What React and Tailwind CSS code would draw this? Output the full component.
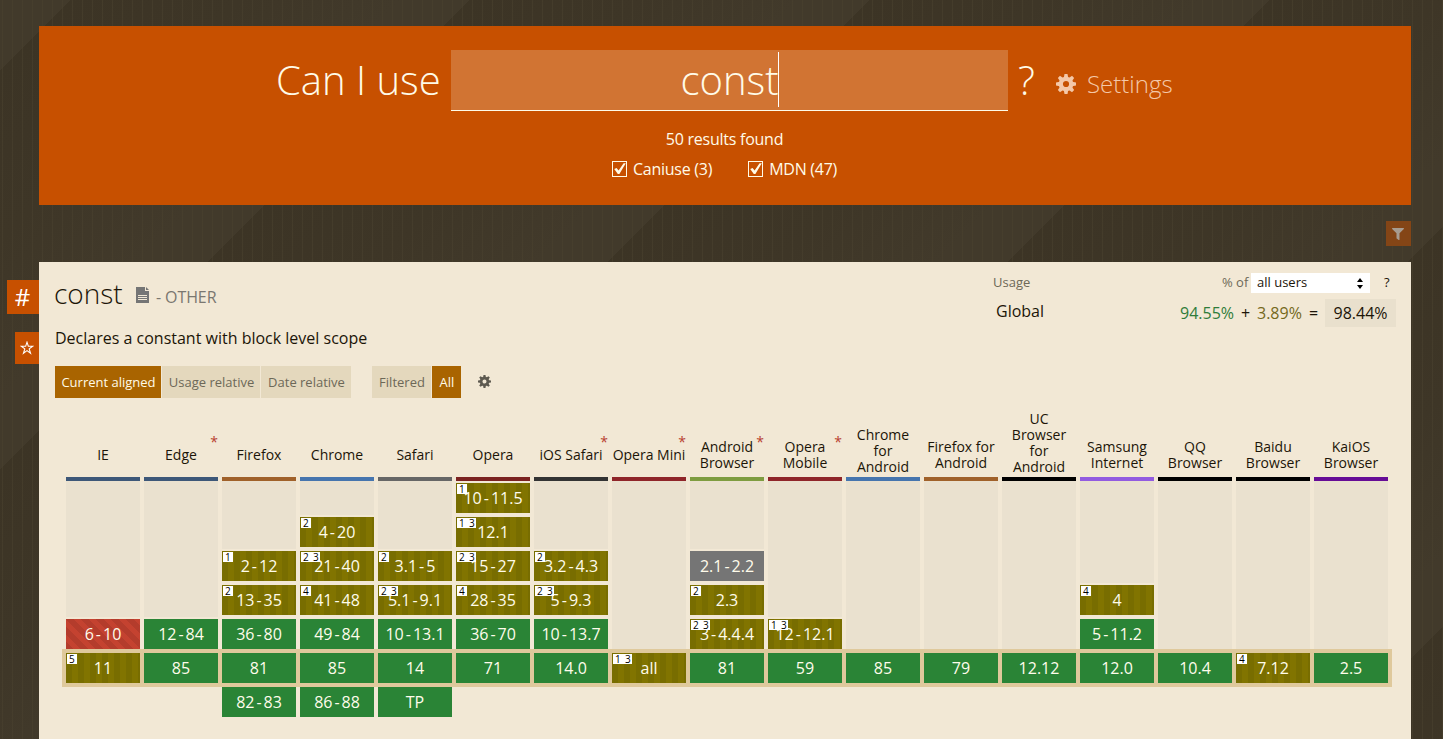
import React from "react";
import { FaFilter } from "react-icons/fa";

const Y = "y", P = "p", N = "n", U = "u";

const browsers = [
  { name: "IE", bar: "bg-[#3d5778]", rows: [0, 0, 0, 0, [N, "6-10"], [P, "11", "5"], 0] },
  { name: "Edge", star: true, bar: "bg-[#3d5778]", rows: [0, 0, 0, 0, [Y, "12-84"], [Y, "85"], 0] },
  { name: "Firefox", bar: "bg-[#a0612a]", rows: [0, 0, [P, "2-12", "1"], [P, "13-35", "2"], [Y, "36-80"], [Y, "81"], [Y, "82-83"]] },
  { name: "Chrome", bar: "bg-[#4675ae]", rows: [0, [P, "4-20", "2"], [P, "21-40", "2 3"], [P, "41-48", "4"], [Y, "49-84"], [Y, "85"], [Y, "86-88"]] },
  { name: "Safari", bar: "bg-[#666666]", rows: [0, 0, [P, "3.1-5", "2"], [P, "5.1-9.1", "2 3"], [Y, "10-13.1"], [Y, "14"], [Y, "TP"]] },
  { name: "Opera", bar: "bg-[#7b2220]", rows: [[P, "10-11.5", "1"], [P, "12.1", "1 3"], [P, "15-27", "2 3"], [P, "28-35", "4"], [Y, "36-70"], [Y, "71"], 0] },
  { name: "iOS Safari", star: true, bar: "bg-[#333333]", rows: [0, 0, [P, "3.2-4.3", "2"], [P, "5-9.3", "2 3"], [Y, "10-13.7"], [Y, "14.0"], 0] },
  { name: "Opera Mini", star: true, bar: "bg-[#8f2529]", rows: [0, 0, 0, 0, 0, [P, "all", "1 3"], 0] },
  { name: "Android Browser", star: true, bar: "bg-[#7e9c40]", rows: [0, 0, [U, "2.1-2.2"], [P, "2.3", "2"], [P, "3-4.4.4", "2 3"], [Y, "81"], 0] },
  { name: "Opera Mobile", star: true, bar: "bg-[#8f2529]", rows: [0, 0, 0, 0, [P, "12-12.1", "1 3"], [Y, "59"], 0] },
  { name: "Chrome for Android", tall: true, bar: "bg-[#4675ae]", rows: [0, 0, 0, 0, 0, [Y, "85"], 0] },
  { name: "Firefox for Android", bar: "bg-[#a0612a]", rows: [0, 0, 0, 0, 0, [Y, "79"], 0] },
  { name: "UC Browser for Android", tall: true, bar: "bg-black", rows: [0, 0, 0, 0, 0, [Y, "12.12"], 0] },
  { name: "Samsung Internet", bar: "bg-[#925be0]", rows: [0, 0, 0, [P, "4", "4"], [Y, "5-11.2"], [Y, "12.0"], 0] },
  { name: "QQ Browser", bar: "bg-black", rows: [0, 0, 0, 0, 0, [Y, "10.4"], 0] },
  { name: "Baidu Browser", bar: "bg-black", rows: [0, 0, 0, 0, 0, [P, "7.12", "4"], 0] },
  { name: "KaiOS Browser", bar: "bg-[#660c96]", rows: [0, 0, 0, 0, 0, [Y, "2.5"], 0] },
];

const fills = {
  y: "bg-[#2a8436]",
  p: "bg-[repeating-linear-gradient(90deg,#786d00_0px,#786d00_6px,#817400_6px,#817400_12px)]",
  n: "bg-[repeating-linear-gradient(45deg,#b43c2c_0px,#b43c2c_5.3px,#c44230_5.3px,#c44230_10.6px)]",
  u: "bg-[#757575]",
};

const teeth = [0, 45, 90, 135, 180, 225, 270, 315];

function Gear({ className }) {
  return (
    <svg viewBox="0 0 20 20" className={className} fill="currentColor">
      {teeth.map((a) => (
        <path key={a} d="M8.5 0h3l0.9 5H7.6z" transform={`rotate(${a} 10 10)`} />
      ))}
      <circle cx="10" cy="10" r="5.2" fill="none" stroke="currentColor" strokeWidth="4.2" />
    </svg>
  );
}

function Version({ text }) {
  const [a, b] = text.split("-");
  if (!b) return <span>{a}</span>;
  return (
    <span>
      {a}
      <span className="mx-[2px]">-</span>
      {b}
    </span>
  );
}

function Cell({ cell }) {
  if (!cell) return <div className="h-[30px]" />;
  const [kind, text, note] = cell;
  return (
    <div className={`relative flex h-[30px] items-center justify-center text-base leading-[30px] text-[#fffceb] ${fills[kind]}`}>
      <Version text={text} />
      {note && (
        <span className="absolute left-px top-px h-[10px] min-w-[10px] whitespace-pre bg-white pl-[2px] pr-px text-[10px] leading-[10px] text-black [word-spacing:-0.4px]">
          {note.replace(" ", "  ")}
        </span>
      )}
    </div>
  );
}

function Column({ browser }) {
  const first = browser.rows.findIndex(Boolean);
  return (
    <div className="w-[74px] shrink-0">
      <div className="relative flex h-[68px] flex-col justify-end">
        <div className={`flex justify-center text-center text-sm leading-4 text-[#1c1508] ${browser.tall ? "items-end pb-[2px]" : "h-11 items-center"}`}>
          <span className={browser.name === "Opera Mini" || browser.name === "iOS Safari" ? "whitespace-nowrap" : ""}>{browser.name}</span>
        </div>
        {browser.star && <span className="absolute right-0 top-[25px] text-sm leading-4 text-[#b8402f]">*</span>}
      </div>
      <div className={`h-1 ${browser.bar}`} />
      <div className="grid grid-cols-1">
        <div className="col-start-1 row-start-1 flex flex-col">
          <div className={`bg-[#eae1cf] ${["h-0", "h-[34px]", "h-[68px]", "h-[102px]", "h-[136px]", "h-[168px]"][first]}`} />
        </div>
        <div className="z-10 col-start-1 row-start-1 flex flex-col gap-1 pt-[2px]">
          {browser.rows.map((cell, i) => (
            <Cell key={i} cell={cell} />
          ))}
        </div>
      </div>
    </div>
  );
}

function Check({ label }) {
  return (
    <span className="flex items-center gap-[5px]">
      <svg width="16" height="16" viewBox="0 0 16 16" fill="none">
        <rect x="0.5" y="0.5" width="14" height="15" stroke="#fffbe8" />
        <path d="M2.2 8L4.6 7l2 2.6L11.6 2.2h2.2L7.4 13H5.8z" fill="#fffbe8" />
      </svg>
      {label}
    </span>
  );
}

function Tab({ active, className, children }) {
  return (
    <div className={`flex h-8 items-center justify-center pl-px pt-px text-[13px] ${active ? "bg-[#a96400] text-[#fffbe8]" : "bg-[#e4d8bd] text-[#6d6858]"} ${className}`}>
      {children}
    </div>
  );
}

export default function App() {
  return (
    <div className="h-[739px] w-[1443px] overflow-hidden bg-[repeating-linear-gradient(90deg,transparent_0px,transparent_2px,#4a422f90_2px,#4a422f90_3px,transparent_3px,transparent_10px),repeating-linear-gradient(135deg,#423a2b_0px,#423a2b_49.5px,#3c3425_49.5px,#3e3627_170px,#423a2b_282.84px)] font-['Open_Sans',sans-serif] text-[#1c1508]">
      <div className="flex flex-col pt-[26px]">
        <header className="ml-[39px] h-[179px] w-[1372px] bg-[#c75000] pt-6 text-[#fffbe8]">
          <div className="flex h-[61px] pl-[237px]">
            <span className="w-[175px] whitespace-nowrap text-[40px] font-light leading-[60px]">Can I use</span>
            <div className="flex h-[61px] w-[557px] items-center justify-center border-b border-[#fffbe8] bg-[#d17433] text-[40px] font-light leading-[60px]">
              <span>const</span>
              <span className="-ml-px mb-[2px] h-[55px] w-px bg-white" />
            </div>
            <span className="ml-[10px] w-[38px] text-[40px] font-light leading-[60px]">?</span>
            <span className="flex items-center gap-[11px] pt-[7px] text-2xl font-light text-[#f4c8a8]">
              <Gear className="size-5" />
              Settings
            </span>
          </div>
          <div className="mt-4 pr-px text-center text-base leading-6 tracking-[-0.25px]">50 results found</div>
          <div className="mt-[6px] flex justify-center gap-9 pr-px text-base leading-6 tracking-[-0.25px]">
            <Check label="Caniuse (3)" />
            <Check label="MDN (47)" />
          </div>
        </header>

        <div className="ml-[1386px] mt-4 flex size-[25px] items-center justify-center bg-[#844516] pr-px">
          <FaFilter className="size-3 text-[#a79c90]" />
        </div>

        <div className="mt-4 flex">
          <div className="flex w-[39px] flex-col items-end pt-[18px]">
            <div className="flex h-[34px] w-8 items-center justify-center bg-[#c75000] pr-px text-2xl text-white">#</div>
            <div className="mt-[18px] flex h-8 w-6 items-center justify-center bg-[#c75000] pr-px">
              <svg width="14" height="14" viewBox="0 0 14 14" fill="none" stroke="#fff" strokeWidth="1.1">
                <path d="M7 1.2l1.35 4.1h4.3L9.2 7.9l1.35 4.3L7 9.6l-3.55 2.6L4.8 7.9 1.35 5.3h4.3z" />
              </svg>
            </div>
          </div>

          <main className="h-[477px] w-[1372px] bg-[#f2e8d5]">
            <div className="flex h-[104px] justify-between pl-4 pr-[15px]">
              <div>
                <div className="flex h-[62px] items-center">
                  <h1 className="-ml-px mb-px w-[82px] text-[28px] font-light">const</h1>
                  <svg width="13" height="16" viewBox="0 0 13 16" className="mt-[4px]">
                    <path d="M0 0H9V4H13V16H0z" fill="#757575" />
                    <path d="M10 0L13 3H10z" fill="#757575" />
                    <path d="M2 8.5h9M2 10.5h9M2 12.5h9" stroke="#f2e8d5" />
                  </svg>
                  <span className="ml-[7px] mt-[7px] text-base tracking-[-0.1px] text-[#7a7770]">- OTHER</span>
                </div>
                <p className="mt-[2px] text-base leading-6">Declares a constant with block level scope</p>
              </div>
              <div className="w-[403px]">
                <div className="mt-[11px] flex h-5 items-center text-[13px] text-[#6d6858]">
                  <span className="w-[229px]">Usage</span>
                  <span className="w-[29px] whitespace-nowrap">% of</span>
                  <span className="flex h-5 w-[119px] items-center justify-between bg-white pl-[6px] pr-[7px] text-[#1c1508]">
                    all users
                    <svg width="6" height="11" viewBox="0 0 6 11">
                      <path d="M3 0L6 4H0zM0 7H6L3 11z" />
                    </svg>
                  </span>
                  <span className="ml-[14px] text-[#1c1508]">?</span>
                </div>
                <div className="mt-[6px] flex h-7 items-center text-base">
                  <span className="-mt-[5px] w-[187px] pl-[3px]">Global</span>
                  <span className="w-[61px] text-[#2f7c3a]">94.55%</span>
                  <span className="w-4">+</span>
                  <span className="w-[52px] text-[#75691c]">3.89%</span>
                  <span className="w-4">=</span>
                  <span className="flex h-7 w-[71px] items-center justify-center bg-[#e9e0cd]">98.44%</span>
                </div>
              </div>
            </div>

            <div className="flex h-8 items-center pl-4">
              <Tab active className="w-[106px]">Current aligned</Tab>
              <Tab className="ml-px w-[98px]">Usage relative</Tab>
              <Tab className="ml-px w-[90px]">Date relative</Tab>
              <Tab className="ml-[21px] w-[59px]">Filtered</Tab>
              <Tab active className="ml-px w-[29px]">All</Tab>
              <Gear className="mb-px ml-[17px] size-[13px] text-[#5e5a50]" />
            </div>

            <div className="relative ml-[27px] mt-[11px] flex gap-1">
              <div className="absolute -left-1 top-[240px] h-[38px] w-[1330px] bg-[#dfc99c]" />
              {browsers.map((b) => (
                <Column key={b.name} browser={b} />
              ))}
            </div>
          </main>
        </div>
      </div>
    </div>
  );
}
